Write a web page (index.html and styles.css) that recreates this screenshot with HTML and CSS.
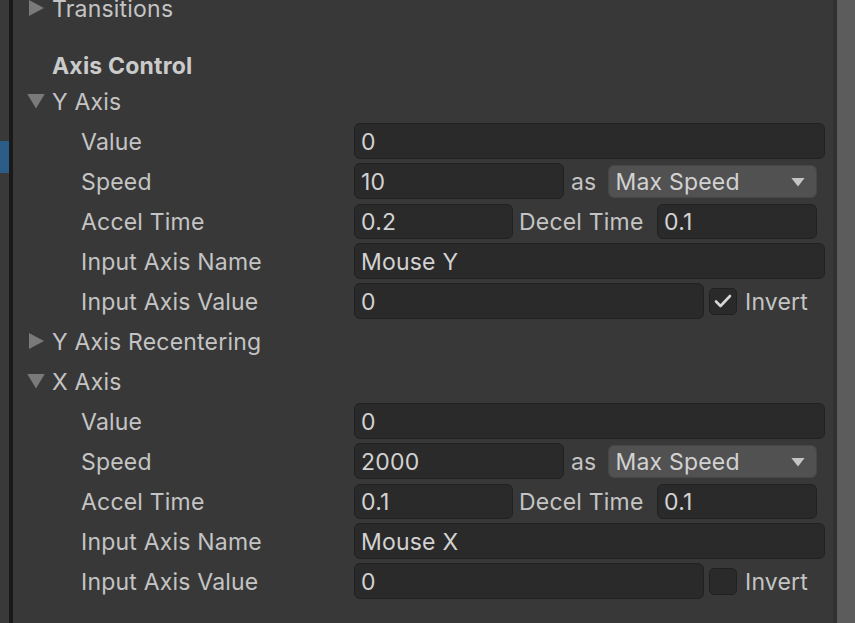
FILE: index.html
```html
<!DOCTYPE html>
<html>
<head>
<meta charset="utf-8">
<link rel="stylesheet" href="styles.css">
</head>
<body>
<div class="window">
  <div class="side"><div class="sel"></div></div>
  <div class="divider"></div>
  <div class="panel">
    <div class="row fold first"><span class="tri right"></span><span class="ftext">Transitions</span></div>
    <div class="row header">Axis Control</div>

    <div class="row fold"><span class="tri down"></span><span class="ftext">Y Axis</span></div>
    <div class="row prop"><span class="label">Value</span><div class="field grow">0</div></div>
    <div class="row prop"><span class="label">Speed</span><div class="field w-speed">10</div><span class="as">as</span><div class="dropdown"><span>Max Speed</span><span class="arrow"></span></div></div>
    <div class="row prop"><span class="label">Accel Time</span><div class="field w-accel">0.2</div><span class="decel">Decel Time</span><div class="field w-decel">0.1</div></div>
    <div class="row prop"><span class="label">Input Axis Name</span><div class="field grow">Mouse Y</div></div>
    <div class="row prop"><span class="label">Input Axis Value</span><div class="field w-value">0</div><div class="check on"><svg width="18" height="14" viewBox="0 0 18 14"><path d="M2 7.5 L6.5 12 L16 2" fill="none" stroke="#d6d6d6" stroke-width="2.6" stroke-linecap="round" stroke-linejoin="round"/></svg></div><span class="invert">Invert</span></div>

    <div class="row fold"><span class="tri right"></span><span class="ftext">Y Axis Recentering</span></div>

    <div class="row fold"><span class="tri down"></span><span class="ftext">X Axis</span></div>
    <div class="row prop"><span class="label">Value</span><div class="field grow">0</div></div>
    <div class="row prop"><span class="label">Speed</span><div class="field w-speed">2000</div><span class="as">as</span><div class="dropdown"><span>Max Speed</span><span class="arrow"></span></div></div>
    <div class="row prop"><span class="label">Accel Time</span><div class="field w-accel">0.1</div><span class="decel">Decel Time</span><div class="field w-decel">0.1</div></div>
    <div class="row prop"><span class="label">Input Axis Name</span><div class="field grow">Mouse X</div></div>
    <div class="row prop"><span class="label">Input Axis Value</span><div class="field w-value">0</div><div class="check"></div><span class="invert">Invert</span></div>
  </div>
  <div class="edge"></div>
  <div class="scroll"></div>
</div>
</body>
</html>
```

FILE: styles.css
```css
* { box-sizing: border-box; }
html, body { margin: 0; padding: 0; }
body {
  background: #383838;
  font-family: Inter, "Noto Sans", sans-serif;
  font-size: 23px;
  letter-spacing: 0.2px;
  color: #c4c4c4;
  overflow: hidden;
}
.window {
  display: flex;
  width: 855px;
  height: 623px;
  overflow: hidden;
}
.side {
  width: 9px;
  background: #393939;
  flex: none;
}
.sel {
  margin-top: 141px;
  height: 32px;
  background: #2c5d87;
}
.divider {
  width: 4px;
  background: #191919;
  flex: none;
}
.panel {
  flex: 1;
  background: #383838;
  padding-right: 8px;
}
.edge {
  width: 4px;
  background: #303030;
  flex: none;
}
.scroll {
  width: 18px;
  background: #5c5c5c;
  flex: none;
}
.row {
  display: flex;
  align-items: center;
  height: 40px;
  white-space: nowrap;
}
.first { margin-top: -12px; }
.header {
  height: 32px;
  margin-top: 21px;
  padding-left: 39px;
  padding-top: 2px;
  font-weight: 700;
  color: #cbcbcb;
}
.fold { padding-left: 15px; }
.ftext { margin-left: 7px; padding-top: 2px; }
.tri { width: 17px; height: 16px; display: inline-block; flex: none; }
.tri.right {
  width: 15px;
  height: 16px;
  background: #7a7a7a;
  clip-path: polygon(0 0, 100% 50%, 0 100%);
  margin-left: 1px;
  margin-right: 1px;
}
.tri.down {
  width: 18px;
  height: 15px;
  background: #7a7a7a;
  clip-path: polygon(0 0, 100% 0, 50% 100%);
  margin-left: -1px;
}
.prop { padding-left: 68px; }
.label { width: 273px; flex: none; padding-top: 2px; }
.field {
  height: 36px;
  background: #2a2a2a;
  border: 1.5px solid #212121;
  border-radius: 6px;
  padding-left: 6px;
  padding-top: 2px;
  display: flex;
  align-items: center;
  color: #d2d2d2;
  flex: none;
}
.grow { flex: 1; }
.w-speed { width: 210px; }
.w-accel { width: 159px; height: 35px; }
.w-decel { width: 160px; height: 35px; }
.w-value { width: 350px; }
.as { margin-left: 7px; margin-right: 12px; padding-top: 2px; }
.dropdown {
  flex: 1;
  margin-right: 8px;
  height: 33px;
  background: #515151;
  border: 1px solid #464646;
  border-radius: 6px;
  display: flex;
  align-items: center;
  justify-content: space-between;
  padding-left: 6px;
  padding-right: 11px;
  padding-top: 2px;
  color: #d2d2d2;
}
.arrow {
  width: 14px;
  height: 9px;
  background: #c4c4c4;
  clip-path: polygon(0 0, 100% 0, 50% 100%);
}
.decel { margin-left: 6px; width: 138px; padding-top: 2px; }
.check {
  width: 28px;
  height: 27px;
  margin-left: 5px;
  background: #2a2a2a;
  border: 1.5px solid #212121;
  border-radius: 5px;
  display: flex;
  align-items: center;
  justify-content: center;
}
.invert { margin-left: 8px; padding-top: 2px; }
```
